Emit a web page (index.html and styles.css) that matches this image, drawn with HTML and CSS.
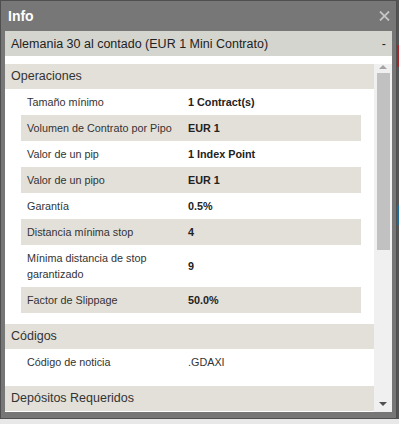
FILE: index.html
```html
<!DOCTYPE html>
<html lang="es">
<head>
  <meta charset="UTF-8">
  <meta name="viewport" content="width=device-width, initial-scale=1.0">
  <title>Info</title>
  <link rel="stylesheet" href="styles.css">
</head>
<body>
  <!-- Info Dialog -->
  <div class="dialog">
    <div class="dialog-title">
      <span>Info</span>
      <button class="close-btn" aria-label="Cerrar">
        <svg width="11" height="10" viewBox="0 0 11 10">
          <path d="M1 0.5 L10 9.5 M10 0.5 L1 9.5" stroke="#c4c4c4" stroke-width="1.8" fill="none"/>
        </svg>
      </button>
    </div>

    <div class="dialog-body">
      <div class="instrument-bar">
        <span>Alemania 30 al contado (EUR 1 Mini Contrato)</span>
        <span class="collapse">-</span>
      </div>

      <div class="scroll-area">
        <div class="scroll-content">
          <!-- Operaciones -->
          <div class="section-header">Operaciones</div>
          <table class="info-table">
            <tr><td>Tamaño mínimo</td><td class="value">1 Contract(s)</td></tr>
            <tr><td>Volumen de Contrato por Pipo</td><td class="value">EUR 1</td></tr>
            <tr><td>Valor de un pip</td><td class="value">1 Index Point</td></tr>
            <tr><td>Valor de un pipo</td><td class="value">EUR 1</td></tr>
            <tr><td>Garantía</td><td class="value">0.5%</td></tr>
            <tr><td>Distancia mínima stop</td><td class="value">4</td></tr>
            <tr><td>Mínima distancia de stop garantizado</td><td class="value">9</td></tr>
            <tr><td>Factor de Slippage</td><td class="value">50.0%</td></tr>
          </table>

          <!-- Códigos -->
          <div class="section-header">Códigos</div>
          <table class="info-table">
            <tr><td>Código de noticia</td><td>.GDAXI</td></tr>
          </table>

          <!-- Depósitos Requeridos -->
          <div class="section-header">Depósitos Requeridos</div>
        </div>

        <!-- Scrollbar -->
        <div class="scrollbar">
          <div class="scroll-btn up"><span class="arrow-up"></span></div>
          <div class="scroll-thumb"></div>
          <div class="scroll-track"></div>
          <div class="scroll-btn down"><span class="arrow-down"></span></div>
        </div>
      </div>
    </div>
  </div>

  <!-- Edge of the app behind the dialog -->
  <div class="app-edge">
    <span class="edge-red"></span>
    <span class="edge-blue"></span>
  </div>
</body>
</html>
```

FILE: styles.css
```css
/* Global Styles */
* {
  margin: 0;
  padding: 0;
  box-sizing: border-box;
}

body {
  font-family: 'Liberation Sans', Arial, sans-serif;
  background-color: #e8e8e8;
  display: flex;
  align-items: flex-start;
  height: 100vh;
  color: #333;
}

/* Dialog */
.dialog {
  width: 397px;
  height: 419px;
  background: #777;
  border: 1px solid #4f4f4f;
  padding: 0 4px 6px 4px;
  display: flex;
  flex-direction: column;
}

.dialog-title {
  height: 30px;
  display: flex;
  justify-content: space-between;
  align-items: center;
  padding: 0 2px 0 3px;
  color: #fff;
  font-size: 14px;
  font-weight: bold;
}

.close-btn {
  background: none;
  border: none;
  display: flex;
  cursor: pointer;
}

.dialog-body {
  flex: 1;
  background: #fff;
  display: flex;
  flex-direction: column;
  overflow: hidden;
}

.instrument-bar {
  height: 25px;
  background: #d5d5cf;
  display: flex;
  justify-content: space-between;
  align-items: center;
  padding: 0 6px;
  font-size: 12.5px;
  color: #222;
  margin-bottom: 8px;
}

/* Scroll Area */
.scroll-area {
  flex: 1;
  display: flex;
  overflow: hidden;
}

.scroll-content {
  flex: 1;
  overflow: hidden;
}

.section-header {
  height: 25px;
  line-height: 25px;
  background: #e3e0d9;
  padding-left: 6px;
  font-size: 12.5px;
  color: #333;
}

.info-table {
  width: 340px;
  margin: 0 13px 11px 16px;
  border-collapse: collapse;
  font-size: 10.8px;
  line-height: 16px;
  color: #333;
}

.info-table tr:nth-child(even) {
  background: #e3e0d9;
}

.info-table td {
  padding: 5px 6px;
  vertical-align: middle;
}

.info-table td:first-child {
  width: 161px;
  padding-right: 3px;
}

.info-table .value {
  font-weight: bold;
  color: #222;
}

/* Scrollbar */
.scrollbar {
  width: 18px;
  background: #f0f0f0;
  display: flex;
  flex-direction: column;
  align-items: center;
}

.scroll-btn {
  width: 100%;
  display: flex;
  justify-content: center;
}

.scroll-btn.up {
  height: 9px;
  padding-top: 1px;
}

.scroll-btn.down {
  height: 12px;
  padding-top: 2px;
}

.arrow-up {
  border-left: 4px solid transparent;
  border-right: 4px solid transparent;
  border-bottom: 4px solid #a3a3a3;
  height: 0;
}

.arrow-down {
  border-left: 4px solid transparent;
  border-right: 4px solid transparent;
  border-top: 4px solid #505050;
  height: 0;
}

.scroll-thumb {
  width: 13px;
  height: 177px;
  background: #c1c1c1;
}

.scroll-track {
  flex: 1;
}

/* App edge behind the dialog */
.app-edge {
  width: 2px;
  height: 419px;
  background: #555;
  display: flex;
  flex-direction: column;
}

.edge-red {
  height: 22px;
  margin-top: 45px;
  background: #a3262a;
}

.edge-blue {
  height: 20px;
  margin-top: 138px;
  background: #1c6b98;
}
```
